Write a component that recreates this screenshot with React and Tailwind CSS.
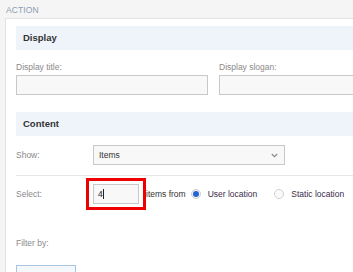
export default function App() {
  return (
    <div className="w-[353px] h-[272px] overflow-hidden bg-[#f5f5f5] font-['Liberation_Sans',Arial,sans-serif]">
      <div className="pl-[6px] pt-[5px] h-[18px] text-[8.5px] leading-[10px] text-[#8a9bb2] tracking-[0.1px]">ACTION</div>
      <div className="ml-[5px] w-[400px] h-[300px] bg-white border border-[#e3e3e3] pl-[10px] pt-[7px]">
        <div className="h-[24px] bg-[#eef4f9] pl-[7px] flex items-center text-[9.5px] font-bold text-[#333]">Display</div>
        <div className="flex gap-[11px] mt-[12px]">
          <div className="w-[192px] shrink-0">
            <div className="text-[8.5px] leading-[10px] text-[#8a8a8a] h-[13px]">Display title:</div>
            <div className="h-[20px] bg-[#f8f8f8] border border-[#c8c8c8]"></div>
          </div>
          <div className="w-[200px] shrink-0">
            <div className="text-[8.5px] leading-[10px] text-[#8a8a8a] h-[13px]">Display slogan:</div>
            <div className="h-[20px] bg-[#f8f8f8] border border-[#c8c8c8]"></div>
          </div>
        </div>
        <div className="h-[24px] mt-[17px] bg-[#eef4f9] pl-[7px] flex items-center text-[9.5px] font-bold text-[#333]">Content</div>
        <div className="flex items-center h-[20px] mt-[9px]">
          <div className="w-[77px] shrink-0 text-[8.5px] text-[#8a8a8a]">Show:</div>
          <div className="w-[192px] shrink-0 h-[20px] bg-[#f8f8f8] border border-[#c8c8c8] flex items-center justify-between pl-[5px] pr-[6px]">
            <span className="text-[8.5px] text-[#333]">Items</span>
            <svg width="7" height="5" viewBox="0 0 7 5"><path d="M0.8 1l2.7 2.6L6.2 1" fill="none" stroke="#888" strokeWidth="1.2" /></svg>
          </div>
        </div>
        <div className="h-px bg-[#e6e6e6] mt-[10px]"></div>
        <div className="flex items-center h-[32px] mt-[2px]">
          <div className="w-[70px] shrink-0 text-[8.5px] text-[#8a8a8a]">Select:</div>
          <div className="w-[60px] shrink-0 h-[32px] border-[3px] border-[#ee0000] flex items-center justify-center">
            <div className="w-[46px] h-[20px] bg-[#f8f8f8] border border-[#c8c8c8] flex items-center pl-[4px] text-[8.5px] text-[#222]">
              4<span className="inline-block w-px h-[10px] bg-[#222]"></span>
            </div>
          </div>
          <span className="ml-[0px] text-[8.5px] text-[#333]">items from</span>
          <span className="ml-[5px] shrink-0 w-[10px] h-[10px] rounded-full border border-[#d0d0d0] bg-[#f3f3f3] flex items-center justify-center">
            <span className="w-[6px] h-[6px] rounded-full bg-[#2364d6]"></span>
          </span>
          <span className="ml-[7px] text-[8.5px] text-[#3b2c4a]">User location</span>
          <span className="ml-[17px] shrink-0 w-[10px] h-[10px] rounded-full border border-[#d0d0d0] bg-[#fafafa]"></span>
          <span className="ml-[7px] text-[8.5px] text-[#3b2c4a]">Static location</span>
        </div>
        <div className="mt-[27px] text-[8.5px] text-[#8a8a8a]">Filter by:</div>
        <div className="mt-[15px] w-[60px] h-[20px] border border-[#a8c6e0] bg-[#f4f8fc]"></div>
      </div>
    </div>
  );
}
